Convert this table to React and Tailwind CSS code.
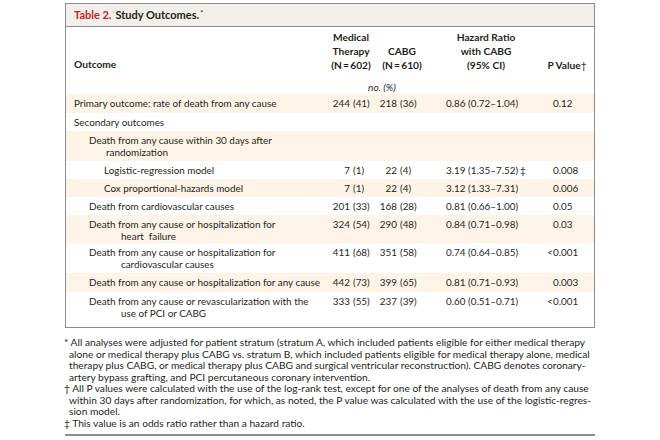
import React from "react";

const rows = [
  { label: ["Primary outcome: rate of death from any cause"], lvl: 0, med: ["244", "41"], cabg: ["218", "36"], hr: "0.86 (0.72–1.04)", p: ["", "0.12"], bg: true, h: "h-[19px]" },
  { label: ["Secondary outcomes"], lvl: 0, bg: false },
  { label: ["Death from any cause within 30 days after", "randomization"], lvl: 1, cont: "pl-[17px]", bg: true, h: "h-[30px]" },
  { label: ["Logistic-regression model"], lvl: 2, med: ["7", "1"], cabg: ["22", "4"], hr: "3.19 (1.35–7.52)", hrMark: true, p: ["", "0.008"], bg: false },
  { label: ["Cox proportional-hazards model"], lvl: 2, med: ["7", "1"], cabg: ["22", "4"], hr: "3.12 (1.33–7.31)", p: ["", "0.006"], bg: true },
  { label: ["Death from cardiovascular causes"], lvl: 1, med: ["201", "33"], cabg: ["168", "28"], hr: "0.81 (0.66–1.00)", p: ["", "0.05"], bg: false },
  { label: ["Death from any cause or hospitalization for", "heart  failure"], lvl: 1, cont: "pl-[32px]", med: ["324", "54"], cabg: ["290", "48"], hr: "0.84 (0.71–0.98)", p: ["", "0.03"], bg: true, h: "h-[28px]" },
  { label: ["Death from any cause or hospitalization for", "cardiovascular causes"], lvl: 1, cont: "pl-[32px]", med: ["411", "68"], cabg: ["351", "58"], hr: "0.74 (0.64–0.85)", p: ["<", "0.001"], bg: false, h: "h-[30px]" },
  { label: ["Death from any cause or hospitalization for any cause"], lvl: 1, med: ["442", "73"], cabg: ["399", "65"], hr: "0.81 (0.71–0.93)", p: ["", "0.003"], bg: true, h: "h-[19px]" },
  { label: ["Death from any cause or revascularization with the", "use of PCI or CABG"], lvl: 1, cont: "pl-[32px]", med: ["333", "55"], cabg: ["237", "39"], hr: "0.60 (0.51–0.71)", p: ["<", "0.001"], bg: false },
];

const lvlPad = ["pl-[8px]", "pl-[23px]", "pl-[38px]"];

function Row({ r }) {
  const dbl = r.label.length > 1;
  const h = r.h || (dbl ? "h-[29px]" : "h-[18px]");
  return (
    <div className={`flex ${h} pt-[3px] leading-[12px] ${r.bg ? "bg-[#fdf4e7]" : "bg-white"}`}>
      <div className={`w-[264px] shrink-0 ${lvlPad[r.lvl]}`}>
        <div className="whitespace-pre">{r.label[0]}</div>
        {dbl && <div className={`${r.cont} whitespace-pre`}>{r.label[1]}</div>}
      </div>
      <div className="w-[42px] shrink-0 whitespace-nowrap">
        {r.med && (
          <>
            <span className="inline-block w-[20px] text-right">{r.med[0]}</span>
            <span className="ml-[3px]">({r.med[1]})</span>
          </>
        )}
      </div>
      <div className="w-[60px] shrink-0 whitespace-nowrap">
        {r.cabg && (
          <>
            <span className="inline-block w-[25px] text-right">{r.cabg[0]}</span>
            <span className="ml-[3px]">({r.cabg[1]})</span>
          </>
        )}
      </div>
      <div className="w-[108px] shrink-0 pl-[14px] whitespace-nowrap">
        {r.hr}
        {r.hrMark && <span className="ml-[2px]">‡</span>}
      </div>
      <div className="w-[54px] shrink-0 pl-[6px] whitespace-nowrap">
        {r.p && (
          <>
            <span className="inline-block w-[7px] text-right">{r.p[0]}</span>
            {r.p[1]}
          </>
        )}
      </div>
    </div>
  );
}

const foot = [
  ["", "* All analyses were adjusted for patient stratum (stratum A, which included patients eligible for either medical therapy"],
  ["pl-[5px]", "alone or medical therapy plus CABG vs. stratum B, which included patients eligible for medical therapy alone, medical"],
  ["pl-[5px]", "therapy plus CABG, or medical therapy plus CABG and surgical ventricular reconstruction). CABG denotes coronary-"],
  ["pl-[5px]", "artery bypass grafting, and PCI percutaneous coronary intervention."],
  ["", "† All P values were calculated with the use of the log-rank test, except for one of the analyses of death from any cause"],
  ["pl-[5px]", "within 30 days after randomization, for which, as noted, the P value was calculated with the use of the logistic-regres-"],
  ["pl-[5px]", "sion model."],
  ["", "‡ This value is an odds ratio rather than a hazard ratio."],
];

export default function App() {
  return (
    <div className="w-[660px] h-[440px] bg-white text-[#231f20] font-['Lato',_sans-serif] overflow-hidden flex flex-col">
      <div className="pt-[3px] pl-[65px] shrink-0">
        <div className="w-[530px] border border-[#8c8c8c]">
          <div className="h-[23px] bg-[#f2eee9] border-b border-[#8c8c8c] pl-[8px] flex items-center text-[11px] font-bold">
            <span className="text-[#c8202f]">Table 2.</span>
            <span className="ml-[4px]">Study Outcomes.</span>
            <span className="text-[7px] font-normal self-start mt-[4px] ml-[1px]">*</span>
          </div>
          <div className="flex items-end pt-[3px] text-[10.2px] font-bold leading-[14px] text-center">
            <div className="w-[264px] shrink-0 pl-[8px] text-left pb-[1px]">Outcome</div>
            <div className="w-[42px] shrink-0 whitespace-nowrap">
              <div>Medical</div>
              <div>Therapy</div>
              <div>(N{"\u2009"}={"\u2009"}602)</div>
            </div>
            <div className="w-[60px] shrink-0 whitespace-nowrap">
              <div>CABG</div>
              <div>(N{"\u2009"}={"\u2009"}610)</div>
            </div>
            <div className="w-[108px] shrink-0 whitespace-nowrap">
              <div>Hazard Ratio</div>
              <div>with CABG</div>
              <div>(95% CI)</div>
            </div>
            <div className="w-[54px] shrink-0 whitespace-nowrap">
              P Value<span className="font-normal">†</span>
            </div>
          </div>
          <div className="flex mt-[8px] h-[14px] leading-[14px] text-[10px] italic">
            <div className="w-[264px] shrink-0" />
            <div className="w-[102px] shrink-0 text-center pl-[2px]">no. (%)</div>
          </div>
          <div className="text-[9.9px] pb-[6px]">
            {rows.map((r, i) => (
              <Row key={i} r={r} />
            ))}
          </div>
        </div>
      </div>
      <div className="pl-[64px] mt-[9px] text-[10.2px] whitespace-nowrap shrink-0">
        {foot.map(([c, t], i) => (
          <div key={i} className={`h-[11.5px] leading-[11.5px] ${c}`}>{t}</div>
        ))}
      </div>
      <div className="ml-[65px] mt-[5px] w-[530px] h-[2px] shrink-0 bg-[#8c8c8c]" />
    </div>
  );
}
